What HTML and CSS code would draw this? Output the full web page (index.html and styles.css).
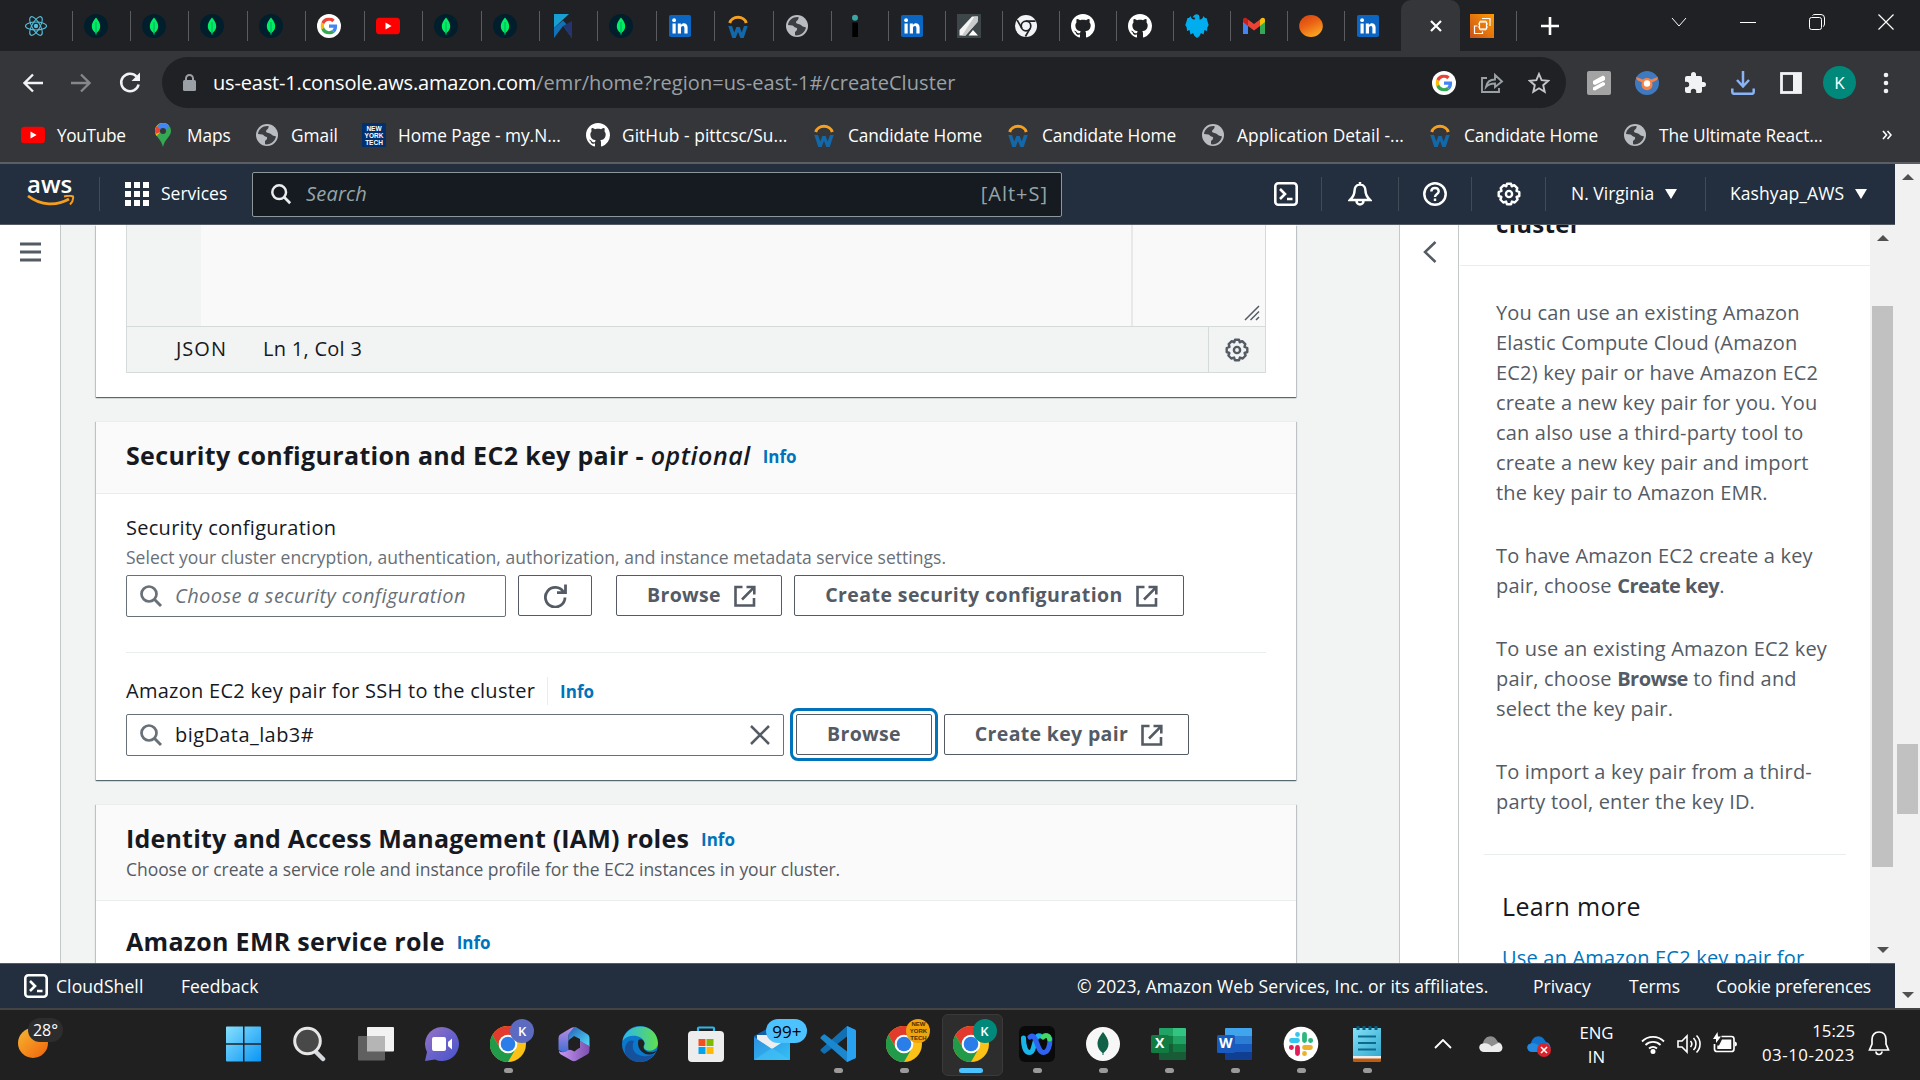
FILE: index.html
```html
<!DOCTYPE html>
<html lang="en">
<head>
<meta charset="utf-8">
<title>Create Cluster</title>
<link rel="stylesheet" href="styles.css">
</head>
<body>
<svg class="defs" width="0" height="0">
  <defs>
    <linearGradient id="g-sun" x1="0" y1="0" x2="1" y2="1"><stop offset="0" stop-color="#f7b733"/><stop offset="1" stop-color="#f0620a"/></linearGradient>
    <linearGradient id="g-ball" x1="0" y1="0" x2=".5" y2="1"><stop offset="0" stop-color="#d8400c"/><stop offset=".5" stop-color="#ea6216"/><stop offset="1" stop-color="#f9a01f"/></linearGradient>
    <linearGradient id="g-win" x1="0" y1="0" x2="1" y2="1"><stop offset="0" stop-color="#86e0fd"/><stop offset="1" stop-color="#0a95f5"/></linearGradient>
    <linearGradient id="g-chat" x1="0" y1="0" x2="1" y2="1"><stop offset="0" stop-color="#9a74c0"/><stop offset=".5" stop-color="#6a63cc"/><stop offset="1" stop-color="#4a53c8"/></linearGradient>
    <linearGradient id="g-ec2" x1="0" y1="1" x2="1" y2="0"><stop offset="0" stop-color="#c8511b"/><stop offset="1" stop-color="#f90"/></linearGradient>
    <linearGradient id="g-edge" x1="0" y1="0" x2="1" y2="0"><stop offset="0" stop-color="#2bb5ee"/><stop offset="1" stop-color="#5fe04f"/></linearGradient>
    <linearGradient id="g-mail" x1="0" y1="0" x2="1" y2="1"><stop offset="0" stop-color="#2d8fe0"/><stop offset="1" stop-color="#33c1f5"/></linearGradient>
    <linearGradient id="g-note" x1="0" y1="0" x2="1" y2="1"><stop offset="0" stop-color="#83e1f7"/><stop offset="1" stop-color="#35a9cf"/></linearGradient>
    <linearGradient id="g-off1" x1="0" y1="0" x2="0" y2="1"><stop offset="0" stop-color="#c08be8"/><stop offset="1" stop-color="#3a6fd0"/></linearGradient>
    <linearGradient id="g-off2" x1="0" y1="0" x2="1" y2="1"><stop offset="0" stop-color="#2560b8"/><stop offset="1" stop-color="#55e0fa"/></linearGradient>
    <linearGradient id="g-off3" x1="0" y1="0" x2="1" y2="0"><stop offset="0" stop-color="#c79af5"/><stop offset="1" stop-color="#7d4fae"/></linearGradient>
    <symbol id="react" viewBox="0 0 24 24"><g fill="none" stroke="#53c1de" stroke-width="1.1"><ellipse cx="12" cy="12" rx="10.5" ry="4"/><ellipse cx="12" cy="12" rx="10.5" ry="4" transform="rotate(60 12 12)"/><ellipse cx="12" cy="12" rx="10.5" ry="4" transform="rotate(120 12 12)"/></g><circle cx="12" cy="12" r="2.2" fill="#53c1de"/></symbol>
    <symbol id="mongo" viewBox="0 0 24 24"><circle cx="12" cy="12" r="12" fill="#001e2b"/><path d="M12 3.500C9 7 7.800 9.500 7.800 12.500C7.800 15.500 9.600 17.600 11.500 19V20.500H12.500V19C14.400 17.600 16.200 15.500 16.200 12.500C16.200 9.500 15 7 12 3.500Z" fill="#00ed64"/><path d="M12 8V19" stroke="#00a35c" stroke-width=".9"/></symbol>
    <symbol id="gglyph" viewBox="0 0 48 48"><path fill="#EA4335" d="M24 9.500c3.540 0 6.710 1.220 9.210 3.600l6.850-6.850C35.900 2.380 30.470 0 24 0 14.620 0 6.510 5.380 2.560 13.220l7.980 6.190C12.430 13.720 17.740 9.500 24 9.500z"/><path fill="#4285F4" d="M46.980 24.550c0-1.570-.15-3.090-.38-4.550H24v9.020h12.940c-.58 2.960-2.260 5.480-4.780 7.180l7.730 6c4.510-4.180 7.090-10.360 7.090-17.650z"/><path fill="#FBBC05" d="M10.530 28.590c-.48-1.450-.76-2.990-.76-4.590s.27-3.140.76-4.590l-7.980-6.190C.92 16.460 0 20.120 0 24s.92 7.540 2.560 10.780z"/><path fill="#34A853" d="M24 48c6.480 0 11.930-2.130 15.890-5.810l-7.730-6c-2.150 1.450-4.920 2.300-8.160 2.300-6.260 0-11.570-4.220-13.470-9.910l-7.980 6.190C6.510 42.620 14.620 48 24 48z"/></symbol>
    <symbol id="google" viewBox="0 0 24 24"><circle cx="12" cy="12" r="12" fill="#fff"/><use href="#gglyph" x="3.500" y="3.500" width="17" height="17"/></symbol>
    <symbol id="youtube" viewBox="0 0 24 24"><rect y="3.700" width="24" height="16.600" rx="3.500" fill="red"/><path d="M9.500 8.500V15.500L15.600 12Z" fill="#fff"/></symbol>
    <symbol id="kaggle" viewBox="0 0 24 24"><path d="M3 0H18L3 14Z" fill="#169fd0"/><path d="M3 14L12 6.500L21 16V24L12 12L3 24Z" fill="#1272b8"/><path d="M12 12L21 7V24Z" fill="#23346f"/></symbol>
    <symbol id="linkedin" viewBox="0 0 24 24"><rect x="1" y="1" width="22" height="22" rx="1.800" fill="#0a66c2"/><path d="M4.500 9.500H7.700V19.500H4.500ZM9.800 9.500H12.900V10.900C14.700 8.300 19.600 8.800 19.600 13.300V19.500H16.400V14C16.400 11.300 13 11.500 13 14V19.500H9.800Z" fill="#fff"/><circle cx="6.100" cy="6.200" r="1.900" fill="#fff"/></symbol>
    <symbol id="workday" viewBox="0 0 24 24"><path d="M3.700 9A8.500 7.200 0 0 1 20.300 9" fill="none" stroke="#f5a01f" stroke-width="3"/><path d="M2.300 12H6L8.300 18.500L10.300 13H13.700L15.700 18.500L18 12H21.700L17.700 24H14.300L12 18L9.700 24H6.300Z" fill="#1268a8"/></symbol>
    <symbol id="globe" viewBox="0 0 24 24"><circle cx="12" cy="12" r="11" fill="#b9bcc0"/><path d="M13.500 3C8 2.500 3.500 6 3 11L7.500 11.500C9 12 9 13.500 11 13.700C13.500 14.200 11.500 17 10 18V21.300C16 22 20 18 21 13.500C19 12.500 17.500 13 16.500 11.500C15 9.500 11.500 10.500 11 8.500C11 6.500 14 6.500 13.500 3Z" fill="#3c3e42"/></symbol>
    <symbol id="github" viewBox="0 0 16 16"><path fill="#fff" d="M8 0C3.580 0 0 3.580 0 8c0 3.540 2.290 6.530 5.470 7.590.4.070.55-.17.55-.38 0-.19-.01-.82-.01-1.490-2.010.37-2.530-.49-2.690-.94-.09-.23-.48-.94-.82-1.130-.28-.15-.68-.52-.01-.53.63-.01 1.080.58 1.230.82.72 1.210 1.870.87 2.330.66.070-.52.28-.87.51-1.070-1.780-.2-3.640-.89-3.640-3.950 0-.87.31-1.590.82-2.150-.08-.2-.36-1.020.08-2.120 0 0 .67-.21 2.200.82.64-.18 1.320-.27 2-.27s1.360.09 2 .27c1.530-1.040 2.200-.82 2.200-.82.44 1.100.16 1.920.08 2.120.51.56.82 1.270.82 2.150 0 3.070-1.870 3.750-3.650 3.950.29.25.54.73.54 1.480 0 1.070-.01 1.930-.01 2.200 0 .21.15.46.55.38A8.010 8.010 0 0 0 16 8c0-4.420-3.580-8-8-8z"/></symbol>
    <symbol id="idot" viewBox="0 0 24 24"><circle cx="12" cy="3.800" r="3" fill="#3aa6a6"/><path d="M9.300 8.500H15V23H9.300Z" fill="#000"/></symbol>
    <symbol id="pen" viewBox="0 0 24 24"><rect width="24" height="24" fill="#3d474a"/><path d="M2.500 21.500V16L15 2.500H21L20.500 8L8.500 21.500Z" fill="#f4f4f4"/><path d="M11.500 21.500H21L16 16Z" fill="#fff"/><path d="M17.500 2.500H21L20.500 8L8.500 21.500H5Z" fill="#c9cccc"/></symbol>
    <symbol id="chromew" viewBox="0 0 24 24"><circle cx="12" cy="12" r="11" fill="#f1f3f4"/><circle cx="12" cy="12" r="4.800" fill="none" stroke="#202124" stroke-width="1.700"/><path d="M12 7.200H21.500M7.900 14.400L3.200 6.200M16.100 14.400L11.400 22.500" stroke="#202124" stroke-width="1.700"/></symbol>
    <symbol id="eagle" viewBox="0 0 24 24"><path fill="#00aeef" d="M9.500 1C11.500 -.3 14.500 .3 14.500 3L14.500 5.500C16 6 18 4.500 18.500 2L20 4L21.500 4L22.500 7.500L23.700 11L22.300 13.500L22 17L19.500 16L18.500 20.500L16 19L14.500 22L12 24L9.500 22L8 19L5.500 20.500L4.500 16L2 17L1.700 13.500L.3 11L1.500 7.500L2.500 4L4 4L5.500 2C6 4.500 8 6 9.500 5.500L10.300 3.700L7.500 3.300Z"/></symbol>
    <symbol id="gmail" viewBox="0 0 24 24"><path d="M1 6V20H6V11Z" fill="#4285f4"/><path d="M23 6V20H18V11Z" fill="#34a853"/><path d="M18 5.500V12L23 8V6C23 3.500 20.500 3.200 19 4.500Z" fill="#fbbc04"/><path d="M6 5.500L12 10L18 5.500V12L12 16.500L6 12Z" fill="#ea4335"/><path d="M1 6C1 3.500 3.500 3.200 5 4.500L6 5.500V12L1 8Z" fill="#c5221f"/></symbol>
    <symbol id="ball" viewBox="0 0 24 24"><ellipse cx="12" cy="12" rx="11.800" ry="11" fill="url(#g-ball)"/></symbol>
    <symbol id="ec2" viewBox="0 0 24 24"><rect width="24" height="24" fill="url(#g-ec2)"/><g fill="none" stroke="#fff" stroke-width="1.200"><rect x="9.500" y="8" width="7" height="7"/><path d="M11 8V6.500M13 8V6.500M15 8V6.500M11 16.500V15M13 16.500V15M15 16.500V15M8 10H9.500M8 13H9.500M16.500 10H18M16.500 13H18M12 4.500H20V12M7.500 12H4.500V19.500H12.500V17.500"/></g></symbol>
    <symbol id="maps" viewBox="0 0 24 24"><path d="M12 0C7.500 0 4 3.500 4 8C4 13.500 10.500 16.500 12 24C13.500 16.500 20 13.500 20 8C20 3.500 16.500 0 12 0Z" fill="#34a853"/><path d="M5.500 13L14 4.500L18 2.800C16.500 1 14.500 0 12 0C7.500 0 4 3.500 4 8C4 10 4.600 11.500 5.500 13Z" fill="#fbbc04"/><path d="M6 3L12 8L4.500 11C3.500 8 4 5 6 3Z" fill="#ea4335"/><path d="M6 3C9 -1 15.500 -1 18.200 3L12 10L9 6Z" fill="#4285f4"/><circle cx="12" cy="8" r="3" fill="#35363a"/></symbol>
    <symbol id="search" viewBox="0 0 24 24"><circle cx="10" cy="10" r="7.500" fill="none" stroke="currentColor" stroke-width="2.700"/><path d="M15.300 15.300L22 22" stroke="currentColor" stroke-width="3"/></symbol>
    <symbol id="external" viewBox="0 0 24 24"><path d="M9.500 3H2.500V21.500H21V14M13.500 3H21.300V10.500M21 3.300L9 15.500" fill="none" stroke="currentColor" stroke-width="2.600"/></symbol>
    <symbol id="gear" viewBox="0 0 24 24"><path fill="none" stroke="currentColor" stroke-width="2.400" stroke-linejoin="round" d="M10 1.700H14L14.700 4.300L17.200 3.200L20.300 6.200L19.500 8.800L22.300 10V14L19.600 15L20.600 17.500L17.700 20.500L14.900 19.600L14 22.300H10L9.100 19.600L6.300 20.500L3.400 17.500L4.400 15L1.700 14V10L4.500 8.800L3.700 6.200L6.800 3.200L9.300 4.300Z"/><circle cx="12" cy="12" r="3.100" fill="none" stroke="currentColor" stroke-width="2.400"/></symbol>
    <symbol id="shell" viewBox="0 0 24 24"><rect x="1.300" y="1.300" width="21.400" height="21.400" rx="3" fill="none" stroke="currentColor" stroke-width="2.600"/><path d="M6 7L11 12L6 17M13 17H18.500" fill="none" stroke="currentColor" stroke-width="2.600"/></symbol>
    <symbol id="chrome" viewBox="0 0 36 36"><circle cx="18" cy="18" r="18" fill="#fbc116"/><path d="M2.400 9A18 18 0 0 1 33.600 9H18A9 9 0 0 0 10.200 22.500Z" fill="#e23b2e"/><path d="M2.400 9A18 18 0 0 0 18 36L25.800 22.500A9 9 0 0 1 10.200 22.500Z" fill="#219a4a"/><circle cx="18" cy="18" r="9.300" fill="#fff"/><circle cx="18" cy="18" r="7.300" fill="#2b7de9"/></symbol>
    <symbol id="office" viewBox="0 0 36 36"><path d="M2.500 12Q2.500 9.500 4.500 8.300L15 2Q18 .5 20 2L12.500 9V24Q12.500 28 8 27L2.500 24Z" fill="url(#g-off1)"/><path d="M12.500 8L18 1.200Q20 .8 21.500 2L31.500 8.300Q33.500 9.500 33.500 12V21L24 15V13L18 10L12.500 15Z" fill="url(#g-off2)"/><path d="M33.500 20V24.500Q33.500 27 31.500 28.200L20.500 34.500Q18 36 15.500 34.500L4.500 28.200Q3 27 2.800 25Q8 28 12.500 24L24 22V15Z" fill="url(#g-off3)"/><path d="M12.500 15.500Q12.500 14 14 13L18 11L22.500 13Q24 14 24 15.500V21L18.500 25.500L14 23.500Q12.500 22.500 12.500 21Z" fill="#202020"/></symbol>
    <symbol id="edge" viewBox="0 0 36 36"><circle cx="18" cy="18" r="18" fill="#0c78cc"/><path d="M.5 15C4 -4 34 -5 36 17C36 25 25 27 22 22C21 20 24 19 22 15C18 8 5 8 .5 15Z" fill="url(#g-edge)"/><path d="M12 15C7 25 17 34 32 28.500C25 38 9 39 3.500 28C1 21 6 12 12 15Z" fill="#15529e"/><path d="M16.500 14C14.500 21 19 27.500 26 28.500C30 29 33 27.500 35 24.500C30 28 21.500 26 21.500 21C21.500 19 23.500 18 21.500 15C20 13 18 12.500 16.500 14Z" fill="#202020"/></symbol>
    <symbol id="store" viewBox="0 0 36 36"><path d="M10 7V2.500Q10 1.500 11 1.500H25Q26 1.500 26 2.500V7" fill="none" stroke="#2fb5ee" stroke-width="2.200"/><rect y="5" width="36" height="31" rx="4" fill="#ededed"/><path fill="#f25022" d="M10.500 13H17.500V20H10.500Z"/><path fill="#7fba00" d="M18.500 13H25.500V20H18.500Z"/><path fill="#00a4ef" d="M10.500 21H17.500V28H10.500Z"/><path fill="#ffb900" d="M18.500 21H25.500V28H18.500Z"/></symbol>
    <symbol id="mail" viewBox="0 0 36 36"><path d="M0 10L18 0L36 10V34H0Z" fill="#1460a8"/><path d="M3 9H33V22L18 26L3 14Z" fill="#eee"/><path d="M0 11L18 23L36 11V33Q36 34 35 34H1Q0 34 0 33Z" fill="url(#g-mail)"/><path d="M0 34L18 22L36 34Z" fill="#45c2f7" opacity=".6"/></symbol>
    <symbol id="vscode" viewBox="0 0 36 36"><path d="M27 0L31 2V14L27 10.500L5 27.500Q4 28 3 27L.8 25Q0 24 .8 23.200Z" fill="#1170b3"/><path d="M27 36L31 34V22L27 25.500L5 8.500Q4 8 3 9L.8 11Q0 12 .8 12.800Z" fill="#1b87cf"/><path d="M27 0L35 3.500Q36 4 36 5V31Q36 32 35 32.500L27 36Z" fill="#27a1f0"/></symbol>
    <symbol id="webex" viewBox="0 0 36 36"><rect width="36" height="36" rx="6" fill="#0a0a0a"/><g fill="none" stroke-width="5" stroke-linecap="round"><path d="M21 10C14.500 8 16.500 26.500 10.500 26.500C6.500 26.500 4.500 20 4.500 12" stroke="#18b5e8"/><path d="M11 11C18 6 17.500 26.500 24.500 26.500C29 26.500 31 20 31 13" stroke="#2e62f0"/><path d="M24 11C26.500 8.500 30 9 30.500 13" stroke="#3fd968"/></g></symbol>
    <symbol id="mongow" viewBox="0 0 36 36"><circle cx="18" cy="18" r="17" fill="#f7f7f7"/><path d="M18 6C14 11 12.500 14 12.500 18C12.500 22 15 25 17.500 27V29H18.500V27C21 25 23.500 22 23.500 18C23.500 14 22 11 18 6Z" fill="#116149"/></symbol>
    <symbol id="excel" viewBox="0 0 36 36"><path fill="#21a366" d="M8 3Q8 2 9 2H22V10H8Z"/><path fill="#33c481" d="M22 2H34Q35 2 35 3V10H22Z"/><path fill="#107c41" d="M8 10H35V18H8Z"/><path fill="#21a366" d="M22 10H35V18H22Z"/><path fill="#185c37" d="M8 18H22V26H35V33Q35 34 34 34H9Q8 34 8 33Z"/><path fill="#107c41" d="M22 18H35V26H22Z"/><rect y="9" width="18" height="18" rx="1.500" fill="#107c41"/></symbol>
    <symbol id="word" viewBox="0 0 36 36"><path fill="#41a5ee" d="M8 3Q8 2 9 2H34Q35 2 35 3V10H8Z"/><path fill="#2b7cd3" d="M8 10H35V18H8Z"/><path fill="#185abd" d="M8 18H35V26H8Z"/><path fill="#103f91" d="M8 26H35V33Q35 34 34 34H9Q8 34 8 33Z"/><rect y="9" width="18" height="18" rx="1.500" fill="#185abd"/></symbol>
    <symbol id="slack" viewBox="0 0 36 36"><circle cx="18" cy="18" r="17.300" fill="#fff"/><g stroke-width="4.800" stroke-linecap="round"><path d="M8.500 14.500H14.500M14.500 8.300V8.500" stroke="#36c5f0"/><path d="M21.500 8.500V14.500M27.500 14.500H27.700" stroke="#2eb67d"/><path d="M21.500 21.500H27.500M21.500 27.500V27.700" stroke="#ecb22e"/><path d="M14.500 21.500V27.500M8.300 21.500H8.500" stroke="#e01e5a"/></g></symbol>
    <symbol id="notepad" viewBox="0 0 36 36"><rect x="4" y="30" width="28" height="6" rx="1" fill="#c05a0c"/><rect x="4" y="29" width="28" height="3.500" fill="#eee"/><path d="M4 2H32V30H4Z" fill="url(#g-note)"/><path d="M9 10.500H27M9 17H27M9 23.500H27" stroke="#0b6a8e" stroke-width="2"/><path d="M9 0V4M15 0V4M21 0V4M27 0V4" stroke="#0a5a7c" stroke-width="3"/></symbol>
    <symbol id="tchat" viewBox="0 0 36 36"><path d="M18 1A17 17 0 1 1 11 33.500L1 35L3 26A17 17 0 0 1 18 1Z" fill="url(#g-chat)"/><rect x="8" y="11" width="14" height="14" rx="2" fill="#fff"/><path d="M24 16L28 12.500V23.500L24 20Z" fill="#fff"/></symbol>
    <symbol id="cloud" viewBox="0 0 24 24"><path d="M4 11.500C5 5 12 2 16.500 6.500L19 10C23.500 10 25.500 19 19.500 20H5C-1 19.500 -1 12 4 11.500Z" fill="var(--back)"/><path d="M5 20C-1 19.500 -1 12 4 11.500C8 10.500 11 12.500 12.500 14.500L19 11C24 11 25.500 19 19.500 20Z" fill="var(--front)"/></symbol>
  </defs>
</svg>

<header class="browser">
  <div class="tabs">
    <div class="tab first"><svg class="i24"><use href="#react"/></svg></div>
    <div class="tab"><svg class="i24"><use href="#mongo"/></svg></div>
    <div class="tab"><svg class="i24"><use href="#mongo"/></svg></div>
    <div class="tab"><svg class="i24"><use href="#mongo"/></svg></div>
    <div class="tab"><svg class="i24"><use href="#mongo"/></svg></div>
    <div class="tab"><svg class="i24"><use href="#google"/></svg></div>
    <div class="tab"><svg class="i24"><use href="#youtube"/></svg></div>
    <div class="tab"><svg class="i24"><use href="#mongo"/></svg></div>
    <div class="tab"><svg class="i24"><use href="#mongo"/></svg></div>
    <div class="tab"><svg class="i24"><use href="#kaggle"/></svg></div>
    <div class="tab"><svg class="i24"><use href="#mongo"/></svg></div>
    <div class="tab"><svg class="i24"><use href="#linkedin"/></svg></div>
    <div class="tab"><svg class="i24"><use href="#workday"/></svg></div>
    <div class="tab"><svg class="i24"><use href="#globe"/></svg></div>
    <div class="tab narrow"><svg class="i24"><use href="#idot"/></svg></div>
    <div class="tab narrow"><svg class="i24"><use href="#linkedin"/></svg></div>
    <div class="tab narrow"><svg class="i24"><use href="#pen"/></svg></div>
    <div class="tab narrow"><svg class="i24"><use href="#chromew"/></svg></div>
    <div class="tab narrow"><svg class="i24"><use href="#github"/></svg></div>
    <div class="tab narrow"><svg class="i24"><use href="#github"/></svg></div>
    <div class="tab narrow"><svg class="i24"><use href="#eagle"/></svg></div>
    <div class="tab narrow"><svg class="i24"><use href="#gmail"/></svg></div>
    <div class="tab narrow"><svg class="i24"><use href="#ball"/></svg></div>
    <div class="tab last"><svg class="i24"><use href="#linkedin"/></svg></div>
    <div class="tab active"><svg width="12" height="12" viewBox="0 0 12 12"><path d="M1 1L11 11M11 1L1 11" stroke="#fff" stroke-width="2.200"/></svg></div>
    <div class="tab narrow after"><svg class="i24"><use href="#ec2"/></svg></div>
    <svg class="newtab" width="18" height="18" viewBox="0 0 18 18"><path d="M9 0V18M0 9H18" stroke="#fff" stroke-width="2.600"/></svg>
    <div class="winctl">
      <svg width="16" height="10" viewBox="0 0 16 10"><path d="M1 1L8 9L15 1" fill="none" stroke="#fff"/></svg>
      <svg width="16" height="16" viewBox="0 0 16 16"><path d="M0 8.500H16" stroke="#fff"/></svg>
      <svg width="16" height="16" viewBox="0 0 16 16"><rect x=".5" y="3.500" width="12" height="12" rx="2" fill="none" stroke="#fff"/><path d="M3.500 1.500Q4 .5 6 .5H12Q15.500 .5 15.500 4V10Q15.500 12 14 12.500" fill="none" stroke="#fff"/></svg>
      <svg width="16" height="16" viewBox="0 0 16 16"><path d="M.5 .5L15.500 15.500M15.500 .5L.5 15.500" stroke="#fff" stroke-width="1.200"/></svg>
    </div>
  </div>
  <div class="toolbar">
    <div class="navbtns">
      <svg width="20" height="20" viewBox="0 0 20 20"><path d="M20 10H2M10 1.500L1.500 10L10 18.500" fill="none" stroke="#f1f3f4" stroke-width="2.300"/></svg>
      <svg width="20" height="20" viewBox="0 0 20 20"><path d="M0 10H18M10 1.500L18.500 10L10 18.500" fill="none" stroke="#85878b" stroke-width="2.300"/></svg>
      <svg width="22" height="22" viewBox="0 0 22 22"><path d="M17.500 4.500A8.800 8.800 0 1 0 19.600 12.500" fill="none" stroke="#f1f3f4" stroke-width="2.500"/><path d="M21 .5V9H12.500Z" fill="#f1f3f4"/></svg>
    </div>
    <div class="omnibox">
      <svg width="13" height="17" viewBox="0 0 13 17"><path d="M3 7V4.500A3.500 3.500 0 0 1 10 4.500V7" fill="none" stroke="#9aa0a6" stroke-width="2"/><rect y="6" width="13" height="11" rx="1.500" fill="#9aa0a6"/></svg>
      <span class="url"><b>us-east-1.console.aws.amazon.com</b><span>/emr/home?region=us-east-1#/createCluster</span></span>
      <span class="omni-icons">
        <svg class="i24"><use href="#google"/></svg>
        <svg width="24" height="22" viewBox="0 0 24 22"><path d="M7 6H2V20H19V16M6 15C7 9 11 7.500 15 7.500V3L22 9.500L15 15V11.500C11 11.500 8.500 12 6 15Z" fill="none" stroke="#9aa0a6" stroke-width="1.900"/></svg>
        <svg width="22" height="22" viewBox="0 0 22 22"><path d="M11 2L13.600 8.200L20.300 8.800L15.200 13.200L16.700 19.800L11 16.300L5.300 19.800L6.800 13.200L1.700 8.800L8.400 8.200Z" fill="none" stroke="#c4c7c9" stroke-width="1.900"/></svg>
      </span>
    </div>
    <div class="exts">
      <svg class="i24" viewBox="0 0 24 24"><rect width="24" height="24" rx="2" fill="#a3a3a3"/><path d="M6 10L16 4.500L18 6V9L8 14L6 13ZM6 16.500L16 11L18 12V14L8 19.500L6 19Z" fill="#fff"/></svg>
      <svg class="i24" viewBox="0 0 24 24"><circle cx="12" cy="12" r="12" fill="#3f7ac0"/><path d="M1 6L8 8.500C10 6.500 14 6.500 16 8.500L23 6L22 9L17 11.500A5.500 5.500 0 1 1 7 11.500L2 9Z" fill="#f58345"/><circle cx="12" cy="12.500" r="3.200" fill="#fff"/></svg>
      <svg class="i24" viewBox="0 0 24 24"><path fill="#f1f3f4" d="M20.500 11H19V7a2 2 0 0 0-2-2h-4V3.500a2.500 2.500 0 0 0-5 0V5H4a2 2 0 0 0-2 2v3.800h1.500a2.700 2.700 0 0 1 0 5.400H2V20a2 2 0 0 0 2 2h3.800v-1.500a2.700 2.700 0 0 1 5.400 0V22H17a2 2 0 0 0 2-2v-4h1.500a2.500 2.500 0 0 0 0-5z"/></svg>
      <svg class="i24" viewBox="0 0 24 24"><path d="M12 0V15M6 9L12 15.500L18 9M1.300 17.500V21Q1.300 22.800 3 22.800H21Q22.700 22.800 22.700 21V17.500" fill="none" stroke="#8ab4f8" stroke-width="2.500"/></svg>
      <svg class="i24" viewBox="0 0 24 24"><rect x="2.500" y="2.500" width="19" height="19" fill="none" stroke="#f1f3f4" stroke-width="2.800"/><path d="M14 2H22V22H14Z" fill="#f1f3f4"/></svg>
      <span class="avatar">K</span>
      <svg width="6" height="22" viewBox="0 0 6 22"><circle cx="3" cy="3" r="2.300" fill="#f1f3f4"/><circle cx="3" cy="11" r="2.300" fill="#f1f3f4"/><circle cx="3" cy="19" r="2.300" fill="#f1f3f4"/></svg>
    </div>
  </div>
  <div class="bookmarks">
    <div class="bm w1"><svg class="i24"><use href="#youtube"/></svg><span>YouTube</span></div>
    <div class="bm w2"><svg class="i24"><use href="#maps"/></svg><span>Maps</span></div>
    <div class="bm w3"><svg class="i24"><use href="#globe"/></svg><span>Gmail</span></div>
    <div class="bm w4"><span class="nyt">NEW<br>YORK<br>TECH</span><span>Home Page - my.N...</span></div>
    <div class="bm w5"><svg class="i24"><use href="#github"/></svg><span>GitHub - pittcsc/Su...</span></div>
    <div class="bm w6"><svg class="i24"><use href="#workday"/></svg><span>Candidate Home</span></div>
    <div class="bm w7"><svg class="i24"><use href="#workday"/></svg><span>Candidate Home</span></div>
    <div class="bm w8"><svg class="i24"><use href="#globe"/></svg><span>Application Detail -...</span></div>
    <div class="bm w9"><svg class="i24"><use href="#workday"/></svg><span>Candidate Home</span></div>
    <div class="bm w10"><svg class="i24"><use href="#globe"/></svg><span>The Ultimate React...</span></div>
    <svg class="more" width="10" height="10" viewBox="0 0 10 10"><path d="M1 1L4.500 5L1 9M5.500 1L9 5L5.500 9" fill="none" stroke="#fff" stroke-width="1.600"/></svg>
  </div>
</header>

<div class="viewport">
  <div class="console">
    <nav class="awsnav">
      <div class="logo"><span>aws</span><svg width="48" height="13" viewBox="0 0 48 13"><path d="M1 1C14 11 30 11 42 4" fill="none" stroke="#f79d1c" stroke-width="2.800"/><path d="M37 1.500C41 .5 44 .5 46 1.500C46.500 4 45.500 7 43 9.500" fill="none" stroke="#f79d1c" stroke-width="2"/></svg></div>
      <div class="services"><svg width="24" height="24" viewBox="0 0 24 24" fill="#fff"><path d="M0 0H6V6H0ZM9 0H15V6H9ZM18 0H24V6H18ZM0 9H6V15H0ZM9 9H15V15H9ZM18 9H24V15H18ZM0 18H6V24H0ZM9 18H15V24H9ZM18 18H24V24H18Z"/></svg><span>Services</span></div>
      <div class="navsearch"><svg width="22" height="22"><use href="#search"/></svg><em>Search</em><span>[Alt+S]</span></div>
      <div class="navicons">
        <div class="nc c1"><svg class="i24"><use href="#shell"/></svg></div>
        <div class="nc c2"><svg class="i24" viewBox="0 0 24 24"><path d="M12 2.500C8 2.500 6.500 6 6.500 9C6.500 13 5 15 2 18H22C19 15 17.500 13 17.500 9C17.500 6 16 2.500 12 2.500ZM12 0V3M8.500 19A3.500 3.500 0 0 0 15.500 19" fill="none" stroke="#fff" stroke-width="2.500"/></svg></div>
        <div class="nc c3"><svg class="i24" viewBox="0 0 24 24"><circle cx="12" cy="12" r="10.700" fill="none" stroke="#fff" stroke-width="2.500"/><path d="M8.300 9.500C8.300 4.800 15.700 4.800 15.700 9.500C15.700 12 12 12 12 15M12 16.500V19" fill="none" stroke="#fff" stroke-width="2.400"/></svg></div>
        <div class="nc c4"><svg class="i24"><use href="#gear"/></svg></div>
        <div class="nc c5"><span>N. Virginia</span><i class="caret"></i></div>
        <div class="nc c6"><span>Kashyap_AWS</span><i class="caret"></i></div>
      </div>
    </nav>
    <div class="page">
      <aside class="siderail"><svg width="21" height="20" viewBox="0 0 21 20"><path d="M0 2H21M0 10H21M0 18H21" stroke="#545b64" stroke-width="2.800"/></svg></aside>
      <main class="content">
        <section class="card card-editor">
          <div class="editor">
            <div class="code"><div class="gutter"></div><div class="text"></div><div class="margin"><svg width="16" height="16" viewBox="0 0 16 16"><path d="M1 15L15 1M6.500 15L15 6.500M12 15L15 12" stroke="#545b64" stroke-width="1.500"/></svg></div></div>
            <div class="status"><span class="lang">JSON</span><span class="pos">Ln 1, Col 3</span><span class="cfg"><svg class="i24"><use href="#gear"/></svg></span></div>
          </div>
        </section>
        <section class="card card-security">
          <div class="head"><h2><span class="ht">Security configuration and EC2 key pair - </span><em>optional</em></h2><a class="info">Info</a></div>
          <div class="body">
            <div class="label"><span>Security configuration</span></div>
            <div class="hint">Select your cluster encryption, authentication, authorization, and instance metadata service settings.</div>
            <div class="row">
              <div class="input i1"><svg width="24" height="24"><use href="#search"/></svg><em>Choose a security configuration</em></div>
              <div class="btn b-refresh"><svg class="i24" viewBox="0 0 24 24"><path d="M20.500 8A9.800 9.800 0 1 0 22 13.500M22.500 .5V8.700H14" fill="none" stroke="currentColor" stroke-width="2.800"/></svg></div>
              <div class="btn b-browse ext"><span>Browse</span><svg class="i24"><use href="#external"/></svg></div>
              <div class="btn b-csc ext"><span>Create security configuration</span><svg class="i24"><use href="#external"/></svg></div>
            </div>
            <hr>
            <div class="label l2"><span>Amazon EC2 key pair for SSH to the cluster</span><a class="info">Info</a></div>
            <div class="row">
              <div class="input i2"><svg width="24" height="24"><use href="#search"/></svg><span>bigData_lab3#</span><svg class="clear" width="20" height="20" viewBox="0 0 20 20"><path d="M1 1L19 19M19 1L1 19" stroke="#545b64" stroke-width="2.500"/></svg></div>
              <div class="btn b-focus"><span>Browse</span></div>
              <div class="btn b-ckp ext"><span>Create key pair</span><svg class="i24"><use href="#external"/></svg></div>
            </div>
          </div>
        </section>
        <section class="card card-iam">
          <div class="head"><h2>Identity and Access Management (IAM) roles</h2><a class="info">Info</a><p>Choose or create a service role and instance profile for the EC2 instances in your cluster.</p></div>
          <div class="body"><h3>Amazon EMR service role</h3><a class="info">Info</a></div>
        </section>
      </main>
      <aside class="toolrail"><svg width="14" height="22" viewBox="0 0 14 22"><path d="M12.500 1L2 11L12.500 21" fill="none" stroke="#545b64" stroke-width="2.500"/></svg></aside>
      <aside class="help">
        <div class="helphead"><h2>cluster</h2></div>
        <div class="helpbody">
          <p>You can use an existing Amazon<br>Elastic Compute Cloud (Amazon<br>EC2) key pair or have Amazon EC2<br>create a new key pair for you. You<br>can also use a third-party tool to<br>create a new key pair and import<br>the key pair to Amazon EMR.</p>
          <p>To have Amazon EC2 create a key<br>pair, choose <b>Create key</b>.</p>
          <p>To use an existing Amazon EC2 key<br>pair, choose <b>Browse</b> to find and<br>select the key pair.</p>
          <p>To import a key pair from a third-<br>party tool, enter the key ID.</p>
          <hr>
          <h3>Learn more</h3>
          <a>Use an Amazon EC2 key pair for</a>
        </div>
      </aside>
      <div class="scroll inner"><i class="up"></i><i class="thumb"></i><i class="down"></i></div>
    </div>
    <footer class="awsfoot">
      <svg class="i24"><use href="#shell"/></svg><span class="cs">CloudShell</span><span class="fb">Feedback</span><span class="cr">© 2023, Amazon Web Services, Inc. or its affiliates.</span><span class="pr">Privacy</span><span class="te">Terms</span><span class="co">Cookie preferences</span>
    </footer>
  </div>
  <div class="scroll outer"><i class="up"></i><i class="thumb"></i><i class="down"></i></div>
</div>

<div class="taskbar">
  <div class="weather"><svg width="32" height="32" viewBox="0 0 32 32"><circle cx="15" cy="16" r="15" fill="url(#g-sun)"/></svg><span>28°</span></div>
  <div class="apps">
    <div class="app"><svg width="36" height="36" viewBox="0 0 36 36"><path d="M0 1Q0 .5 1 .5H17V17.300H0ZM18.500 .5H34Q35 .5 35 1.500V17.300H18.500ZM0 18.800H17V35.500H1Q0 35.500 0 34.500ZM18.500 18.800H35V34.500Q35 35.500 34 35.500H18.500Z" fill="url(#g-win)"/></svg></div>
    <div class="app"><svg width="36" height="36" viewBox="0 0 36 36"><path d="M23 25L31 33" stroke="#d5d8dc" stroke-width="4.500" stroke-linecap="round"/><circle cx="15.500" cy="15" r="12.800" fill="#484848" stroke="#e6e6e6" stroke-width="3"/></svg></div>
    <div class="app"><svg width="36" height="36" viewBox="0 0 36 36"><rect x="9" y="1" width="27" height="24.500" rx="1" fill="#f2f2f2"/><rect x="0" y="10" width="27" height="24.500" rx="1" fill="#606060"/><path d="M9 10H27V25.500H9Z" fill="#b5b5b5"/></svg></div>
    <div class="app"><svg width="36" height="36"><use href="#tchat"/></svg></div>
    <div class="app run"><svg width="36" height="36"><use href="#chrome"/></svg><span class="badge bk">K</span></div>
    <div class="app"><svg width="36" height="36"><use href="#office"/></svg></div>
    <div class="app"><svg width="36" height="36"><use href="#edge"/></svg></div>
    <div class="app"><svg width="36" height="36"><use href="#store"/></svg></div>
    <div class="app"><svg width="36" height="36"><use href="#mail"/></svg><span class="badge count">99+</span></div>
    <div class="app run"><svg width="36" height="36"><use href="#vscode"/></svg></div>
    <div class="app run"><svg width="36" height="36"><use href="#chrome"/></svg><span class="badge ny">NEW<br>YORK<br>TECH</span></div>
    <div class="app run current"><svg width="36" height="36"><use href="#chrome"/></svg><span class="badge gk">K</span></div>
    <div class="app run"><svg width="36" height="36"><use href="#webex"/></svg></div>
    <div class="app run"><svg width="36" height="36"><use href="#mongow"/></svg></div>
    <div class="app run"><svg width="36" height="36"><use href="#excel"/></svg><span class="letter">X</span></div>
    <div class="app run"><svg width="36" height="36"><use href="#word"/></svg><span class="letter">W</span></div>
    <div class="app run"><svg width="36" height="36"><use href="#slack"/></svg></div>
    <div class="app run"><svg width="36" height="36"><use href="#notepad"/></svg></div>
  </div>
  <div class="tray">
    <div class="t t1"><svg width="18" height="10" viewBox="0 0 18 10"><path d="M1 9L9 1L17 9" fill="none" stroke="#fff" stroke-width="1.800"/></svg></div>
    <div class="t t2"><svg class="i24"><use href="#cloud"/></svg></div>
    <div class="t t3"><svg class="i24"><use href="#cloud"/></svg><svg class="err" width="14" height="14" viewBox="0 0 14 14"><circle cx="7" cy="7" r="7" fill="#d9222a"/><path d="M4 4L10 10M10 4L4 10" stroke="#fff" stroke-width="1.600"/></svg></div>
    <div class="t t4"><span>ENG</span><span>IN</span></div>
    <div class="t t5"><svg class="i24" viewBox="0 0 24 24" fill="none" stroke="#fff" stroke-width="1.800"><path d="M1 9.500A15.500 15.500 0 0 1 23 9.500M4.500 13A10.800 10.800 0 0 1 19.500 13M8 16.500A6 6 0 0 1 16 16.500"/><circle cx="12" cy="19.500" r="1.600" fill="#fff"/></svg></div>
    <div class="t t6"><svg class="i24" viewBox="0 0 24 24" fill="none" stroke="#fff" stroke-width="1.600"><path d="M1 9H5L10 4V20L5 15H1ZM13.500 9A4.500 4.500 0 0 1 13.500 15M16.500 6A8.500 8.500 0 0 1 16.500 18M19.500 3.500A12 12 0 0 1 19.500 20.500"/></svg></div>
    <div class="t t7"><svg class="i24" viewBox="0 0 24 24"><path d="M8.500 4.500H18.500Q21 4.500 21 7V17Q21 19.500 18.500 19.500H4Q1.500 19.500 1.500 17V12" fill="none" stroke="#fff" stroke-width="1.700"/><path d="M9 7.500H18.300V17H4.300V13.500H6ZM22 9.500Q24 10 24 12T22 14.500ZM4.500 0L0 7H3V11L8 4.500H5Z" fill="#fff"/></svg></div>
    <div class="t t8"><span>15:25</span><span class="date">03-10-2023</span></div>
    <div class="t t9"><svg width="22" height="28" viewBox="0 0 22 28"><path d="M11 2C6.500 2 4 5 4 9.500V14L1.500 20H20.500L18 14V9.500C18 5 15.500 2 11 2ZM8 21.500A3 3 0 0 0 14 21.500" fill="none" stroke="#fff" stroke-width="1.700"/></svg></div>
  </div>
</div>
</body>
</html>
```
FILE: styles.css
```css
* { box-sizing: border-box; }
body { margin: 0; width: 1920px; height: 1080px; overflow: hidden; font-family: "Open Sans", "Noto Sans", sans-serif; font-size: 20px; color: #16191f; background: #202124; }
svg { display: block; flex: none; }
.defs { position: absolute; }
.i24 { width: 24px; height: 24px; }
h2, h3, p { margin: 0; }
span, em, b, a { white-space: nowrap; }

/* browser chrome */
.browser { height: 164px; background: #35363a; border-bottom: 2px solid #5c5e64; color: #fff; }
.tabs { display: flex; height: 51px; background: #202124; align-items: center; }
.tab { width: 58.450px; height: 30px; padding-left: 11px; border-right: 1px solid #5b5c5f; display: flex; align-items: center; flex: none; }
.tab.first { width: 72.500px; padding-left: 24px; }
.tab.narrow { width: 57px; }
.tab.last { width: 56px; border: 0; }
.tab.active { width: 59px; height: 51px; border: 0; background: #35363a; border-radius: 10px 10px 0 0; padding-left: 29px; }
.tab.after { width: 57px; padding-left: 10px; }
.newtab { margin-left: 24px; }
.winctl { display: flex; margin-left: 112px; margin-top: -8px; align-items: center; gap: 53px; }
.toolbar { display: flex; height: 63px; align-items: center; }
.navbtns { display: flex; width: 162px; padding-left: 23px; gap: 28px; align-items: center; }
.omnibox { width: 1404px; height: 51px; border-radius: 26px; background: #202124; display: flex; align-items: center; padding: 0 16px 0 21px; }
.url { margin: -1px 0 0 17px; font-size: 20px; color: #9aa0a6; }
.url b { font-weight: 400; color: #fff; letter-spacing: -.17px; }
.url span { letter-spacing: .08px; }
.omni-icons { margin-left: auto; display: flex; align-items: center; gap: 24px; }
.exts { display: flex; align-items: center; gap: 24px; margin-left: 21px; }
.avatar { width: 33px; height: 33px; margin: 0 3px 0 -4px; border-radius: 50%; background: #00897b; display: grid; place-items: center; font-size: 17px; }
.bookmarks { display: flex; height: 42px; align-items: center; padding-left: 21px; font-size: 17.300px; }
.bm { display: flex; align-items: center; gap: 12px; flex: none; }
.w1 { width: 130px; } .w2 { width: 104px; } .w3 { width: 107px; } .w4 { width: 224px; } .w5 { width: 226px; }
.w6 { width: 194px; } .w7 { width: 195px; } .w8 { width: 227px; } .w9 { width: 195px; } .w10 { width: 259px; }
.w1 { letter-spacing: -.35px; }
.w2, .w6, .w7, .w9, .w10 { letter-spacing: -.1px; }
.w5, .w8 { letter-spacing: .08px; }
.nyt { width: 24px; height: 24px; background: #00306e; font: bold 6.500px/7px "Liberation Sans", sans-serif; text-align: center; padding-top: 2px; letter-spacing: 0; }

/* console header */
.viewport { display: flex; height: 844px; }
.console { width: 1895px; }
.awsnav { height: 61px; background: #232f3e; border-bottom: 1px solid #545b64; display: flex; align-items: center; color: #fff; font-size: 17.500px; font-weight: 500; }
.awsnav > div > span, .nc span { margin-top: -2px; }
.logo { width: 100px; height: 34px; padding-left: 27px; border-right: 1px solid #414b58; }
.awsnav .logo span { display: block; font-size: 24px; line-height: 22px; height: 22px; margin-top: -4px; font-weight: 600; }
.services { width: 152px; padding-left: 25px; display: flex; align-items: center; gap: 12px; }
.navsearch { width: 810px; height: 45px; border: 1px solid #8d9699; border-radius: 2px; background: #161b22; display: flex; align-items: center; padding: 0 13px 0 17px; color: #95a5a6; font-size: 20px; font-weight: 400; }
.navsearch svg { color: #eaeded; }
.navsearch em { margin: -2px 0 0 14px; letter-spacing: .2px; }
.navsearch span { margin-left: auto; letter-spacing: 1px; }
.navicons { display: flex; }
.nc { height: 34px; display: flex; align-items: center; justify-content: center; border-right: 1px solid #414b58; }
.c1 { width: 260px; padding-left: 188px; } .c2 { width: 77px; } .c3 { width: 73px; } .c4 { width: 74px; }
.c5 { width: 160px; padding-left: 25px; justify-content: flex-start; }
.c6 { border: 0; padding-left: 24px; }
.c5 span { width: 94px; } .c6 span { width: 125px; letter-spacing: .08px; }
.caret { border: 6px solid transparent; border-top: 10px solid #fff; border-bottom: 0; }

/* page */
.page { display: flex; height: 738px; background: #f2f3f3; overflow: hidden; }
.siderail { width: 61px; background: #fff; border-right: 1px solid #c3c8c8; padding: 17px 0 0 20px; }
.content { width: 1338px; padding-left: 35px; background: #f2f4f4; letter-spacing: .28px; }
.card { width: 1200px; background: #fff; box-shadow: 0 1px 1px rgba(0,28,36,.5), 1px 1px 1px rgba(0,28,36,.15), -1px 1px 1px rgba(0,28,36,.15); }
.card-editor { height: 172px; padding: 0 30px; margin-bottom: 24px; }
.editor { width: 1140px; height: 148px; border: 1px solid #d5dbdb; border-top: 0; background: #f2f3f3; }
.code { display: flex; height: 101px; }
.gutter { width: 74px; background: #f2f3f3; }
.text { width: 932px; background: #f9f9f9; border-right: 2px solid #e8e8e8; }
.margin { flex: 1; background: #f9f9f9; display: flex; align-items: flex-end; justify-content: flex-end; padding: 5px; }
.status { height: 46px; border-top: 1px solid #d5dbdb; display: flex; align-items: center; padding-left: 49px; }
.status .lang, .status .pos { margin-top: -3px; }
.status .lang { width: 87px; letter-spacing: 1px; }
.cfg { margin-left: auto; width: 57px; height: 45px; border-left: 1px solid #d5dbdb; display: grid; place-items: center; color: #545b64; }
.card-security { height: 359px; margin-bottom: 24px; }
.head { background: #fafafa; border-top: 1px solid #eaeded; border-bottom: 1px solid #eaeded; padding: 18px 30px 0; display: flex; flex-wrap: wrap; column-gap: 12px; }
.card-security .head { height: 73px; }
h2, h3 { font-size: 25px; line-height: 30px; font-weight: 700; letter-spacing: .17px; }
.ht { white-space: pre; letter-spacing: .33px; }
h2 em { font-weight: 600; letter-spacing: .55px; }
.info { color: #0073bb; font-weight: 700; font-size: 17px; line-height: 34px; letter-spacing: 0; }
.body { padding: 20px 30px 0; }
.label { line-height: 28px; height: 28px; display: flex; }
.hint { font-size: 17.500px; line-height: 30px; height: 33px; color: #687078; letter-spacing: .02px; }
.row { display: flex; height: 42px; align-items: flex-start; }
.input { height: 42px; border: 1px solid #687078; border-radius: 2px; background: #fff; display: flex; align-items: center; padding: 0 13px 0 12px; gap: 12px; letter-spacing: .42px; }
.input > svg:first-child { color: #687078; }
.input em { color: #687078; }
.input em, .input span, .btn span { margin-top: -2px; }
.i1 { width: 380px; } .i2 { width: 658px; }
.clear { margin-left: auto; }
.btn { height: 41px; border: 1px solid #545b64; border-radius: 2px; color: #545b64; font-size: 19.500px; font-weight: 700; display: flex; align-items: center; justify-content: center; gap: 12px; letter-spacing: .33px; }
.ext { padding-left: 6px; }
.b-refresh { width: 74px; margin-left: 12px; }
.b-browse { width: 166px; margin-left: 24px; }
.b-csc { width: 390px; margin-left: 12px; letter-spacing: .42px; }
.b-focus { width: 136px; margin-left: 12px; outline: 3px solid #0073bb; outline-offset: 3px; }
.b-ckp { width: 245px; margin-left: 12px; }
.body hr { border: 0; height: 1px; background: #eaeded; margin: 35px 0 24px; }
.l2 { margin-bottom: 9px; }
.label .info { line-height: 29px; margin-left: 12px; padding-left: 12px; border-left: 1px solid #eaeded; }
.card-iam { height: 300px; }
.card-iam .head { height: 97px; align-content: flex-start; }
.card-iam h2 { letter-spacing: .2px; }
.card-iam p { width: 100%; font-size: 17.500px; line-height: 24px; color: #545b64; letter-spacing: -.05px; margin-top: 2px; }
.card-iam .head .info { height: 32px; }
.card-iam .body { padding-top: 25px; display: flex; gap: 12px; }
.card-iam h3 { letter-spacing: .3px; }
.toolrail { width: 60px; background: #fff; border-left: 1px solid #c3c8c8; border-right: 1px solid #c3c8c8; padding: 16px 0 0 23px; }
.help { width: 411px; background: #fff; padding-left: 1px; letter-spacing: .18px; }
.helphead { display: flow-root; height: 41px; border-bottom: 1px solid #eaeded; padding-left: 36px; }
.helphead h2 { margin-top: -16px; font-size: 24px; letter-spacing: .3px; }
.helpbody { padding: 32px 0 0 36px; color: #545b64; }
.helpbody p { line-height: 30px; margin-bottom: 33px; }
.helpbody b { letter-spacing: -.5px; }
.helpbody hr { border: 0; height: 1px; width: 362px; background: #eaeded; margin: 37px 0 36px -12px; }
.helpbody h3 { font-weight: 400; color: #16191f; margin: 0 0 22px 6px; letter-spacing: .35px; }
.helpbody a { color: #0073bb; margin-left: 6px; line-height: 30px; letter-spacing: .2px; }
.scroll { width: 25px; background: #f1f1f1; display: flex; flex-direction: column; align-items: center; }
.up { border: 6px solid transparent; border-bottom: 6px solid #505050; border-top: 0; }
.down { border: 6px solid transparent; border-top: 6px solid #505050; border-bottom: 0; margin-top: auto; }
.thumb { width: 21px; background: #c1c1c1; }
.inner { padding: 10px 0; }
.inner .thumb { height: 561px; margin-top: 65px; }
.outer { padding: 10px 0; }
.outer .thumb { height: 70px; margin-top: 564px; }
.awsfoot { height: 45px; background: #232f3e; border-top: 1px solid #545b64; display: flex; align-items: center; padding-left: 24px; color: #fff; font-size: 17.500px; font-weight: 500; }
.awsfoot span { flex: none; margin-top: -1px; }
.cs { width: 125px; margin-left: 8px; letter-spacing: .1px; }
.fb { width: 896px; }
.cr { width: 456px; letter-spacing: .06px; } .pr { width: 96px; } .te { width: 87px; }
.co { letter-spacing: -.15px; }

/* taskbar */
.taskbar { height: 72px; background: #202020; border-top: 2px solid #444; display: flex; color: #fff; }
.weather { width: 211px; padding: 17px 0 0 18px; position: relative; }
.weather span { position: absolute; left: 28px; top: 8px; width: 35px; height: 24px; border-radius: 12px; background: #2d2d2d; font-size: 16px; line-height: 24px; text-align: center; }
.apps { display: flex; width: 1189px; }
.app { width: 66.060px; height: 70px; flex: none; position: relative; display: flex; justify-content: center; padding-top: 16px; }
.run::after { content: ""; position: absolute; left: 29px; top: 58px; width: 9px; height: 5px; border-radius: 3px; background: #9a9a9a; }
.current::before { content: ""; position: absolute; left: 4px; top: 4px; width: 59px; height: 60px; border-radius: 6px; background: #2d2d2d; border: 1px solid #3a3a3a; }
.current svg { position: relative; }
.current::after { left: 21px; width: 24px; background: #4cc2ff; }
.badge { position: absolute; left: 35px; top: 9px; width: 24px; height: 24px; border-radius: 50%; font-size: 13px; font-weight: 600; display: grid; place-items: center; }
.bk { background: #5c6bc0; } .gk { background: #00897b; }
.ny { background: #f0a30a; color: #4a3000; font: bold 6px/7px "Liberation Sans", sans-serif; text-align: center; }
.count { left: 27px; width: 41px; border-radius: 12px; background: #4cc2ff; color: #000; font-size: 17px; font-weight: 400; }
.letter { position: absolute; left: 15px; top: 24px; width: 18px; line-height: 18px; text-align: center; font-size: 14px; font-weight: 700; }
.tray { display: flex; align-items: center; height: 68px; font-size: 16.800px; line-height: 24px; }
.t { display: flex; justify-content: center; flex: none; position: relative; }
.t1 { width: 48px; margin-left: 19px; }
.t2, .t3 { width: 48px; }
.t2 { --back: #8e8e8e; --front: #ececec; }
.t3 { --back: #1273cc; --front: #2489e0; }
.err { position: absolute; left: 22px; top: 11px; }
.t4 { width: 67px; flex-direction: column; align-items: center; margin-top: 2px; }
.t5 { width: 45px; } .t6 { width: 28px; } .t7 { width: 44px; }
.t8 { width: 108px; flex-direction: column; align-items: flex-end; margin-top: -2px; }
.date { letter-spacing: .55px; }
.t9 { width: 48px; }
```
